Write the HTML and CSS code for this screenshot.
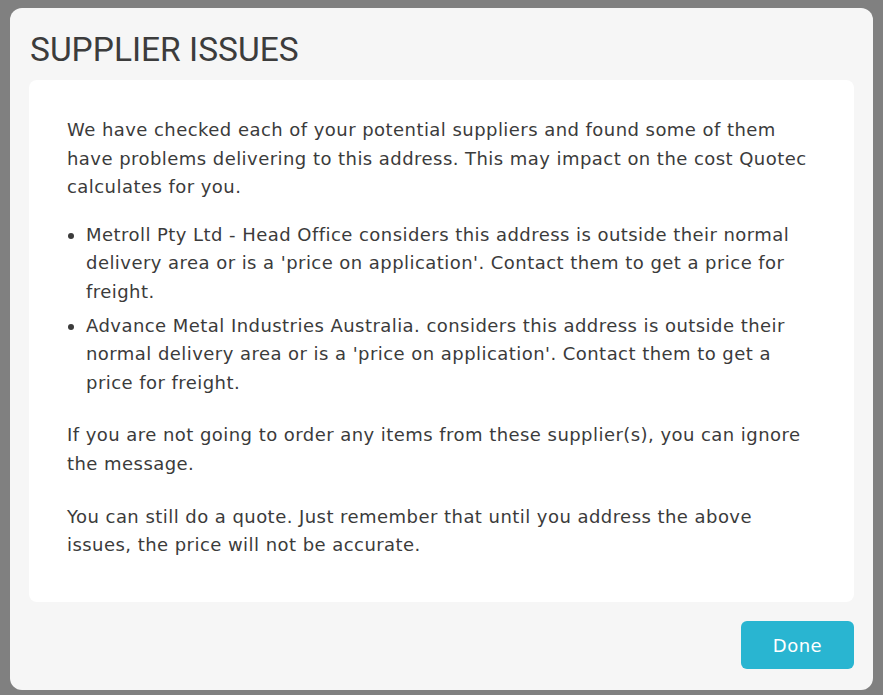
FILE: index.html
```html
<!DOCTYPE html>
<html lang="en">
<head>
    <meta charset="UTF-8">
    <meta name="viewport" content="width=device-width, initial-scale=1.0">
    <title>Supplier Issues</title>
    <link rel="stylesheet" href="styles.css">
</head>
<body>
    <div class="backdrop">
        <div class="modal">
            <h1 class="modal-title">SUPPLIER ISSUES</h1>
            <div class="modal-body">
                <p class="intro">We have checked each of your potential suppliers and found some of them have problems delivering to this address. This may impact on the cost Quotec calculates for you.</p>
                <ul class="issue-list">
                    <li>Metroll Pty Ltd - Head Office considers this address is outside their normal delivery area or is a 'price on application'. Contact them to get a price for freight.</li>
                    <li>Advance Metal Industries Australia. considers this address is outside their normal delivery area or is a 'price on application'. Contact them to get a price for freight.</li>
                </ul>
                <p>If you are not going to order any items from these supplier(s), you can ignore the message.</p>
                <p>You can still do a quote. Just remember that until you address the above issues, the price will not be accurate.</p>
            </div>
            <div class="modal-footer">
                <button class="btn-done">Done</button>
            </div>
        </div>
    </div>
</body>
</html>
```

FILE: styles.css
```css
body {
    margin: 0;
    background-color: #808080;
    font-family: "DejaVu Sans", sans-serif;
    color: #3b3b3b;
}
.backdrop {
    height: 695px;
    padding: 8px 10px 5px 10px;
    box-sizing: border-box;
}
.modal {
    background-color: #f6f6f6;
    border-radius: 12px;
    height: 682px;
    padding: 0 19px 0 19px;
    box-sizing: border-box;
    display: flex;
    flex-direction: column;
}
.modal-title {
    font-family: Roboto, sans-serif;
    font-weight: 400;
    font-size: 33.5px;
    color: #3c3c3c;
    margin: 0;
    padding: 22px 0 0 1px;
    height: 50px;
}
.modal-body {
    background-color: #fff;
    border-radius: 8px;
    padding: 36px 38px 22px 38px;
    font-size: 18px;
    letter-spacing: 0.45px;
    line-height: 28.6px;
    height: 522px;
    box-sizing: border-box;
}
.modal-body p {
    margin: 0 0 24px 0;
}
.modal-body p.intro {
    margin-bottom: 19px;
}
.issue-list {
    margin: 0 0 24px 0;
    padding-left: 19px;
}
.issue-list li {
    margin-bottom: 5px;
}
.modal-footer {
    display: flex;
    justify-content: flex-end;
    padding-top: 19px;
}
.btn-done {
    width: 113px;
    height: 48px;
    border: none;
    border-radius: 6px;
    background-color: #29b5d1;
    color: #fff;
    font-family: "DejaVu Sans", sans-serif;
    font-size: 18px;
    letter-spacing: 0.5px;
    cursor: pointer;
}
```
